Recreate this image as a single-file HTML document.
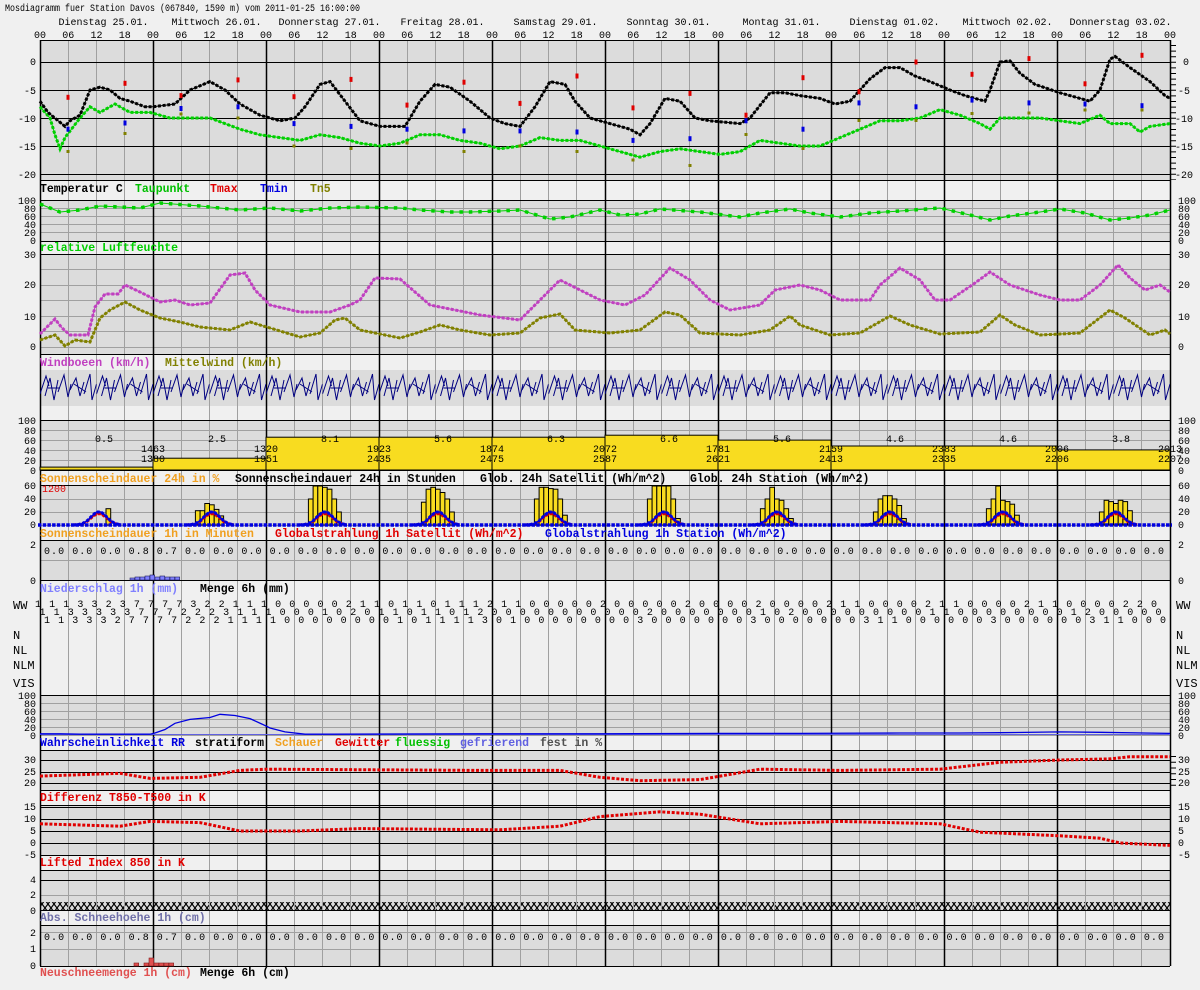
<!DOCTYPE html>
<html><head><meta charset="utf-8"><style>
html,body{margin:0;padding:0;background:#f0f0f0;}
svg{display:block;}
text{font-family:"Liberation Mono",monospace;}
.s{font-size:10px;fill:#000;}
.lb{font-size:11.5px;font-weight:bold;}
</style></head><body>
<svg xmlns="http://www.w3.org/2000/svg" xmlns:xlink="http://www.w3.org/1999/xlink" width="1200" height="990" viewBox="0 0 1200 990">
<defs>
<pattern id="hat" width="6" height="8" patternUnits="userSpaceOnUse">
<rect width="6" height="8" fill="#dcdcdc"/>
<path d="M0 0L6 8M6 0L0 8" stroke="#000" stroke-width="1.2"/>
</pattern>
<pattern id="barb" x="40" y="372" width="56.5" height="34" patternUnits="userSpaceOnUse">
<path d="M0 22L6 4L9 14M5 24L10 6L14 28L18 8M18 20L24 3L28 25L31 12M30 18L36 6L40 24L44 10M44 22L50 2L52 28L56.5 12M8 16H20M34 12L46 20" fill="none" stroke="#000080" stroke-width="1"/>
</pattern>
<g id="bellR"><polyline points="73,525 77.7,524.7 82.4,523.8 87.1,521.4 91.8,517.3 96.5,513.8 101.2,513.8 105.9,517.3 110.6,521.4 115.3,523.8 120,524.7" fill="none" stroke="#e00000" stroke-width="1.5"/><polyline points="73,525 77.7,524.7 82.4,523.8 87.1,521.4 91.8,517.3 96.5,513.8 101.2,513.8 105.9,517.3 110.6,521.4 115.3,523.8 120,524.7" fill="none" stroke="#e00000" stroke-width="3" stroke-dasharray="3 1.7"/>
<polyline points="73,525 77.7,524.7 82.4,523.6 87.1,520.8 91.8,516.1 96.5,512 101.2,512 105.9,516.1 110.6,520.8 115.3,523.6 120,524.7" fill="none" stroke="#0000e0" stroke-width="1.5"/><polyline points="73,525 77.7,524.7 82.4,523.6 87.1,520.8 91.8,516.1 96.5,512 101.2,512 105.9,516.1 110.6,520.8 115.3,523.6 120,524.7" fill="none" stroke="#0000e0" stroke-width="3" stroke-dasharray="3 1.7"/></g>
</defs>
<rect width="1200" height="990" fill="#f0f0f0"/>
<g fill="#dcdcdc">
<rect x="40" y="40" width="1130" height="140"/>
<rect x="40" y="200" width="1130" height="41"/>
<rect x="40" y="254" width="1130" height="100"/>
<rect x="40" y="370" width="1130" height="36"/>
<rect x="40" y="420" width="1130" height="50"/>
<rect x="40" y="485" width="1130" height="40"/>
<rect x="40" y="540" width="1130" height="40"/>
<rect x="40" y="695" width="1130" height="40"/>
<rect x="40" y="750" width="1130" height="40"/>
<rect x="40" y="805" width="1130" height="50"/>
<rect x="40" y="870" width="1130" height="40"/>
<rect x="40" y="925" width="1130" height="41"/>
</g>
<rect x="40" y="902" width="1130" height="8" fill="url(#hat)"/>
<!-- vertical gray grid -->
<path stroke="#a0a0a0" stroke-width="1" fill="none" d="M68.5 40V966M96.5 40V966M124.5 40V966M181.5 40V966M209.5 40V966M237.5 40V966M294.5 40V966M322.5 40V966M350.5 40V966M407.5 40V966M435.5 40V966M463.5 40V966M520.5 40V966M548.5 40V966M576.5 40V966M633.5 40V966M661.5 40V966M689.5 40V966M746.5 40V966M774.5 40V966M802.5 40V966M859.5 40V966M887.5 40V966M915.5 40V966M972.5 40V966M1000.5 40V966M1028.5 40V966M1085.5 40V966M1113.5 40V966M1141.5 40V966"/>

<!-- horizontal grid gray -->
<g stroke="#a0a0a0" stroke-width="1">
<path d="M40 208.5H1170M40 216.5H1170M40 224.5H1170M40 232.5H1170M40 269.5H1170M40 285.5H1170M40 300.5H1170M40 316.5H1170M40 331.5H1170M40 347.5H1170M40 430.5H1170M40 440.5H1170M40 450.5H1170M40 460.5H1170M40 499.5H1170M40 512.5H1170M40 525.5H1170M40 560.5H1170M40 703.5H1170M40 711.5H1170M40 719.5H1170M40 727.5H1170M40 735.5H1170M40 895.5H1170M40 932.5H1170M40 949.5H1170"/>
</g>
<g stroke="#000" stroke-width="1">
<path d="M40 40.5H1170M40 62.5H1170M40 90.5H1170M40 118.5H1170M40 146.5H1170M40 174.5H1170M40 180.5H1170M40 200.5H1170M40 241.5H1170M40 254.5H1170M40 354.5H1170M40 420.5H1170M40 470.5H1170M40 485.5H1170M40 540.5H1170M40 580.5H1170M40 695.5H1170M40 750.5H1170M40 760.5H1170M40 772.5H1170M40 783.5H1170M40 790.5H1170M40 805.5H1170M40 807.5H1170M40 819.5H1170M40 831.5H1170M40 843.5H1170M40 855.5H1170M40 870.5H1170M40 880.5H1170M40 910.5H1170M40 925.5H1170M40 966.5H1170"/>
</g>
<!-- vertical black day lines -->
<path stroke="#000" stroke-width="1.5" fill="none" d="M40.5 40V966M153.5 40V966M266.5 40V966M379.5 40V966M492.5 40V966M605.5 40V966M718.5 40V966M831.5 40V966M944.5 40V966M1057.5 40V966M1170.5 40V966"/>
<!-- right minor ticks -->
<line x1="1173" y1="45" x2="1173" y2="180" stroke="#000" stroke-width="6" stroke-dasharray="1 4.6"/>
<line x1="1173" y1="756" x2="1173" y2="790" stroke="#000" stroke-width="6" stroke-dasharray="1 4.75"/>

<!-- temperature -->
<polyline fill="none" stroke="#00d000" stroke-width="1" points="40,106.8 50,118 55,134.8 60,148.8 65,137.6 80,118 90,106.8 100,112.4 115,104 130,112.4 150,112.4 170,118 210,118 240,129.2 260,134.8 280,137.6 300,140.4 320,134.8 340,137.6 360,143.2 380,146 400,143.2 420,134.8 440,134.8 460,140.4 480,143.2 500,148.8 520,146 540,137.6 560,140.4 580,140.4 600,146 620,151.6 640,157.2 660,151.6 680,148.8 700,151.6 720,154.4 740,151.6 760,140.4 780,143.2 800,146 820,146 840,137.6 860,129.2 880,120.8 900,120.8 920,118 940,109.6 960,115.2 980,123.6 990,129.2 1000,118 1040,118 1060,120.8 1080,123.6 1100,115.2 1110,123.6 1130,123.6 1140,132 1150,126.4 1170,123.6"/>
<polyline fill="none" stroke="#00d000" stroke-width="3" stroke-dasharray="3 1.7" points="40,106.8 50,118 55,134.8 60,148.8 65,137.6 80,118 90,106.8 100,112.4 115,104 130,112.4 150,112.4 170,118 210,118 240,129.2 260,134.8 280,137.6 300,140.4 320,134.8 340,137.6 360,143.2 380,146 400,143.2 420,134.8 440,134.8 460,140.4 480,143.2 500,148.8 520,146 540,137.6 560,140.4 580,140.4 600,146 620,151.6 640,157.2 660,151.6 680,148.8 700,151.6 720,154.4 740,151.6 760,140.4 780,143.2 800,146 820,146 840,137.6 860,129.2 880,120.8 900,120.8 920,118 940,109.6 960,115.2 980,123.6 990,129.2 1000,118 1040,118 1060,120.8 1080,123.6 1100,115.2 1110,123.6 1130,123.6 1140,132 1150,126.4 1170,123.6"/>
<polyline fill="none" stroke="#000" stroke-width="1" points="40,101.2 48,112.4 65,126.4 70,120.8 80,115.2 90,90 100,87.2 110,90 120,98.4 130,101.2 145,106.8 153,106.8 175,104 190,90 210,81.6 225,90 240,104 260,115.2 280,120.8 295,118 305,106.8 320,84.4 330,81.6 345,101.2 360,120.8 380,126.4 405,126.4 420,101.2 435,84.4 450,87.2 470,101.2 490,118 505,123.6 520,126.4 535,106.8 550,81.6 565,84.4 575,101.2 590,118 610,123.6 630,129.2 640,134.8 650,123.6 665,98.4 680,101.2 695,118 710,120.8 740,123.6 750,118 770,92.8 785,92.8 800,95.6 820,98.4 835,104 850,101.2 870,78.8 885,67.6 900,67.6 915,76 930,81.6 950,90 965,95.6 985,101.2 990,90 1000,62 1010,60.9 1020,73.2 1035,84.4 1060,92.8 1080,98.4 1090,101.2 1100,90 1110,59.2 1115,56.4 1130,67.6 1150,81.6 1165,95.6 1170,98.4"/>
<polyline fill="none" stroke="#000" stroke-width="3" stroke-dasharray="3 1.7" points="40,101.2 48,112.4 65,126.4 70,120.8 80,115.2 90,90 100,87.2 110,90 120,98.4 130,101.2 145,106.8 153,106.8 175,104 190,90 210,81.6 225,90 240,104 260,115.2 280,120.8 295,118 305,106.8 320,84.4 330,81.6 345,101.2 360,120.8 380,126.4 405,126.4 420,101.2 435,84.4 450,87.2 470,101.2 490,118 505,123.6 520,126.4 535,106.8 550,81.6 565,84.4 575,101.2 590,118 610,123.6 630,129.2 640,134.8 650,123.6 665,98.4 680,101.2 695,118 710,120.8 740,123.6 750,118 770,92.8 785,92.8 800,95.6 820,98.4 835,104 850,101.2 870,78.8 885,67.6 900,67.6 915,76 930,81.6 950,90 965,95.6 985,101.2 990,90 1000,62 1010,60.9 1020,73.2 1035,84.4 1060,92.8 1080,98.4 1090,101.2 1100,90 1110,59.2 1115,56.4 1130,67.6 1150,81.6 1165,95.6 1170,98.4"/>
<!-- Tn5 -->
<g fill="#808000">
<rect x="66.5" y="150" width="3" height="3"/><rect x="123.5" y="132" width="3" height="3"/><rect x="179.5" y="112.5" width="3" height="3"/><rect x="236.5" y="116.5" width="3" height="3"/><rect x="292.5" y="144.5" width="3" height="3"/><rect x="349.5" y="147" width="3" height="3"/><rect x="405.5" y="141.5" width="3" height="3"/><rect x="462.5" y="150" width="3" height="3"/><rect x="518.5" y="144.5" width="3" height="3"/><rect x="575.5" y="150" width="3" height="3"/><rect x="631.5" y="158.5" width="3" height="3"/><rect x="688.5" y="164" width="3" height="3"/><rect x="744.5" y="133" width="3" height="3"/><rect x="801.5" y="147" width="3" height="3"/><rect x="857.5" y="119" width="3" height="3"/><rect x="914.5" y="119" width="3" height="3"/><rect x="970.5" y="112" width="3" height="3"/><rect x="1027.5" y="111.5" width="3" height="3"/><rect x="1083.5" y="108.5" width="3" height="3"/><rect x="1140.5" y="108.5" width="3" height="3"/>
</g>
<g fill="#0000e0">
<rect x="66.5" y="126.7" width="3" height="5"/><rect x="123.5" y="120.5" width="3" height="5"/><rect x="179.5" y="106" width="3" height="5"/><rect x="236.5" y="104.3" width="3" height="5"/><rect x="292.5" y="121.1" width="3" height="5"/><rect x="349.5" y="123.9" width="3" height="5"/><rect x="405.5" y="126.7" width="3" height="5"/><rect x="462.5" y="128.4" width="3" height="5"/><rect x="518.5" y="128.4" width="3" height="5"/><rect x="575.5" y="129.5" width="3" height="5"/><rect x="631.5" y="137.9" width="3" height="5"/><rect x="688.5" y="136.2" width="3" height="5"/><rect x="744.5" y="118.3" width="3" height="5"/><rect x="801.5" y="126.7" width="3" height="5"/><rect x="857.5" y="100.4" width="3" height="5"/><rect x="914.5" y="104.3" width="3" height="5"/><rect x="970.5" y="97.6" width="3" height="5"/><rect x="1027.5" y="100.4" width="3" height="5"/><rect x="1083.5" y="101.5" width="3" height="5"/><rect x="1140.5" y="103.2" width="3" height="5"/>
</g>
<g fill="#e00000">
<rect x="66.5" y="94.8" width="3" height="5"/><rect x="123.5" y="80.8" width="3" height="5"/><rect x="179.5" y="93.1" width="3" height="5"/><rect x="236.5" y="77.4" width="3" height="5"/><rect x="292.5" y="94.2" width="3" height="5"/><rect x="349.5" y="76.9" width="3" height="5"/><rect x="405.5" y="102.6" width="3" height="5"/><rect x="462.5" y="79.7" width="3" height="5"/><rect x="518.5" y="100.9" width="3" height="5"/><rect x="575.5" y="73.5" width="3" height="5"/><rect x="631.5" y="105.4" width="3" height="5"/><rect x="688.5" y="90.9" width="3" height="5"/><rect x="744.5" y="112.7" width="3" height="5"/><rect x="801.5" y="75.2" width="3" height="5"/><rect x="857.5" y="89.2" width="3" height="5"/><rect x="914.5" y="59.5" width="3" height="5"/><rect x="970.5" y="71.8" width="3" height="5"/><rect x="1027.5" y="56.1" width="3" height="5"/><rect x="1083.5" y="81.3" width="3" height="5"/><rect x="1140.5" y="52.8" width="3" height="5"/>
</g>

<!-- humidity -->
<polyline fill="none" stroke="#00d000" stroke-width="1" points="40,204 60,212 80,210 100,206 140,208 160,203 200,206 240,210 270,208 300,211 330,208 360,207 400,208 420,210 450,212 470,212 500,211 520,210 550,219 570,217 600,210 620,215 640,214 660,209 700,212 740,217 760,213 790,209 810,213 840,217 870,213 900,211 940,208 970,215 990,220 1010,216 1040,212 1060,209 1085,213 1110,220 1130,218 1150,215 1170,210"/>
<polyline fill="none" stroke="#00d000" stroke-width="3.5" stroke-dasharray="3.5 5.9" points="40,204 60,212 80,210 100,206 140,208 160,203 200,206 240,210 270,208 300,211 330,208 360,207 400,208 420,210 450,212 470,212 500,211 520,210 550,219 570,217 600,210 620,215 640,214 660,209 700,212 740,217 760,213 790,209 810,213 840,217 870,213 900,211 940,208 970,215 990,220 1010,216 1040,212 1060,209 1085,213 1110,220 1130,218 1150,215 1170,210"/>

<!-- wind -->
<polyline fill="none" stroke="#c040c0" stroke-width="1" points="40,334 55,319 62,328 70,335 88,335 95,307 105,294 118,294 125,285 140,292 160,302 175,300 190,305 210,303 230,275 245,273 255,290 270,305 300,312 330,312 350,305 360,300 375,278 400,279 430,305 460,311 480,315 520,320 545,295 560,280 580,290 600,300 625,305 645,295 670,268 690,280 710,300 730,310 760,305 775,290 800,285 820,290 840,300 870,300 880,285 900,268 920,280 935,300 950,300 975,283 990,272 1010,285 1040,295 1060,300 1080,300 1100,285 1118,265 1130,278 1145,290 1160,285 1170,292"/>
<polyline fill="none" stroke="#c040c0" stroke-width="3" stroke-dasharray="3 1.7" points="40,334 55,319 62,328 70,335 88,335 95,307 105,294 118,294 125,285 140,292 160,302 175,300 190,305 210,303 230,275 245,273 255,290 270,305 300,312 330,312 350,305 360,300 375,278 400,279 430,305 460,311 480,315 520,320 545,295 560,280 580,290 600,300 625,305 645,295 670,268 690,280 710,300 730,310 760,305 775,290 800,285 820,290 840,300 870,300 880,285 900,268 920,280 935,300 950,300 975,283 990,272 1010,285 1040,295 1060,300 1080,300 1100,285 1118,265 1130,278 1145,290 1160,285 1170,292"/>
<polyline fill="none" stroke="#808000" stroke-width="1" points="40,340 55,335 65,346 75,340 90,342 100,318 110,310 125,302 140,310 160,318 180,322 200,327 230,330 250,322 270,328 300,337 320,333 335,320 345,318 360,330 400,338 420,332 440,325 460,330 490,335 520,333 540,318 560,314 575,330 610,333 640,330 665,312 680,315 700,333 740,335 770,330 790,316 800,325 830,335 860,333 890,316 910,325 940,334 980,332 1000,315 1015,325 1040,335 1080,333 1110,310 1125,318 1150,335 1165,330 1170,334"/>
<polyline fill="none" stroke="#808000" stroke-width="3" stroke-dasharray="3 1.7" points="40,340 55,335 65,346 75,340 90,342 100,318 110,310 125,302 140,310 160,318 180,322 200,327 230,330 250,322 270,328 300,337 320,333 335,320 345,318 360,330 400,338 420,332 440,325 460,330 490,335 520,333 540,318 560,314 575,330 610,333 640,330 665,312 680,315 700,333 740,335 770,330 790,316 800,325 830,335 860,333 890,316 910,325 940,334 980,332 1000,315 1015,325 1040,335 1080,333 1110,310 1125,318 1150,335 1165,330 1170,334"/>
<rect x="40" y="372" width="1130" height="34" fill="url(#barb)"/>

<!-- sunshine 24h -->
<g fill="#f8dc20" stroke="#000" stroke-width="1">
<rect x="40" y="467.1" width="113" height="2.9"/><rect x="153" y="458.2" width="113" height="11.8"/><rect x="266" y="437.2" width="113" height="32.8"/><rect x="379" y="437.2" width="113" height="32.8"/><rect x="492" y="437.2" width="113" height="32.8"/><rect x="605" y="435.2" width="113" height="34.8"/><rect x="718" y="440.1" width="113" height="29.9"/><rect x="831" y="446" width="113" height="24"/><rect x="944" y="446" width="113" height="24"/><rect x="1057" y="449.9" width="113" height="20.1"/>
</g>
<!-- sunshine 1h bars -->
<g fill="#f8dc20" stroke="#000" stroke-width="1">
<rect x="106" y="508.7" width="4.7" height="16.3"/>
<rect x="195.4" y="510.7" width="4.7" height="14.3"/><rect x="200.1" y="510.7" width="4.7" height="14.3"/><rect x="204.8" y="503.5" width="4.7" height="21.5"/><rect x="209.5" y="504.8" width="4.7" height="20.2"/><rect x="214.2" y="509.4" width="4.7" height="15.6"/><rect x="218.9" y="515.9" width="4.7" height="9.1"/>
<rect x="308.4" y="499" width="4.7" height="26"/><rect x="313.1" y="486" width="4.7" height="39"/><rect x="317.8" y="486" width="4.7" height="39"/><rect x="322.5" y="487.3" width="4.7" height="37.7"/><rect x="327.2" y="489.2" width="4.7" height="35.8"/><rect x="331.9" y="499" width="4.7" height="26"/><rect x="336.6" y="512" width="4.7" height="13"/>
<rect x="421.4" y="502.2" width="4.7" height="22.8"/><rect x="426.1" y="489.2" width="4.7" height="35.8"/><rect x="430.8" y="487.3" width="4.7" height="37.7"/><rect x="435.5" y="489.2" width="4.7" height="35.8"/><rect x="440.2" y="492.5" width="4.7" height="32.5"/><rect x="444.9" y="499" width="4.7" height="26"/><rect x="449.6" y="512" width="4.7" height="13"/>
<rect x="534.4" y="499" width="4.7" height="26"/><rect x="539.1" y="487.3" width="4.7" height="37.7"/><rect x="543.8" y="487.3" width="4.7" height="37.7"/><rect x="548.5" y="488.6" width="4.7" height="36.4"/><rect x="553.2" y="489.2" width="4.7" height="35.8"/><rect x="557.9" y="499" width="4.7" height="26"/><rect x="562.6" y="515.2" width="4.7" height="9.8"/>
<rect x="647.4" y="499" width="4.7" height="26"/><rect x="652.1" y="486" width="4.7" height="39"/><rect x="656.8" y="486" width="4.7" height="39"/><rect x="661.5" y="486" width="4.7" height="39"/><rect x="666.2" y="486" width="4.7" height="39"/><rect x="670.9" y="499" width="4.7" height="26"/><rect x="675.6" y="518.5" width="4.7" height="6.5"/>
<rect x="760.4" y="508.7" width="4.7" height="16.3"/><rect x="765.1" y="499" width="4.7" height="26"/><rect x="769.8" y="487.3" width="4.7" height="37.7"/><rect x="774.5" y="499" width="4.7" height="26"/><rect x="779.2" y="500.3" width="4.7" height="24.7"/><rect x="783.9" y="508.7" width="4.7" height="16.3"/><rect x="788.6" y="518.5" width="4.7" height="6.5"/>
<rect x="873.4" y="512" width="4.7" height="13"/><rect x="878.1" y="499" width="4.7" height="26"/><rect x="882.8" y="495.7" width="4.7" height="29.3"/><rect x="887.5" y="495.7" width="4.7" height="29.3"/><rect x="892.2" y="499" width="4.7" height="26"/><rect x="896.9" y="505.5" width="4.7" height="19.5"/><rect x="901.6" y="518.5" width="4.7" height="6.5"/>
<rect x="986.4" y="508.7" width="4.7" height="16.3"/><rect x="991.1" y="499" width="4.7" height="26"/><rect x="995.8" y="486" width="4.7" height="39"/><rect x="1000.5" y="500.3" width="4.7" height="24.7"/><rect x="1005.2" y="501.6" width="4.7" height="23.4"/><rect x="1009.9" y="504.2" width="4.7" height="20.8"/><rect x="1014.6" y="515.2" width="4.7" height="9.8"/>
<rect x="1099.4" y="512" width="4.7" height="13"/><rect x="1104.1" y="500.3" width="4.7" height="24.7"/><rect x="1108.8" y="501.6" width="4.7" height="23.4"/><rect x="1113.5" y="503.5" width="4.7" height="21.5"/><rect x="1118.2" y="500.3" width="4.7" height="24.7"/><rect x="1122.9" y="501.6" width="4.7" height="23.4"/><rect x="1127.6" y="510.7" width="4.7" height="14.3"/>
</g>
<use xlink:href="#bellR" href="#bellR"/>
<use xlink:href="#bellR" href="#bellR" transform="translate(113 0)"/>
<use xlink:href="#bellR" href="#bellR" transform="translate(226 0)"/>
<use xlink:href="#bellR" href="#bellR" transform="translate(339 0)"/>
<use xlink:href="#bellR" href="#bellR" transform="translate(452 0)"/>
<use xlink:href="#bellR" href="#bellR" transform="translate(565 0)"/>
<use xlink:href="#bellR" href="#bellR" transform="translate(678 0)"/>
<use xlink:href="#bellR" href="#bellR" transform="translate(791 0)"/>
<use xlink:href="#bellR" href="#bellR" transform="translate(904 0)"/>
<use xlink:href="#bellR" href="#bellR" transform="translate(1017 0)"/>
<line x1="38" y1="525" x2="1172" y2="525" stroke="#0000e0" stroke-width="3.5" stroke-dasharray="3.5 1.2"/>

<!-- precipitation bars -->
<g fill="#8080ff" stroke="#202060" stroke-width="0.6">
<rect x="130" y="578" width="4.7" height="2"/><rect x="135" y="577" width="4.7" height="3"/><rect x="140" y="577" width="4.7" height="3"/><rect x="145" y="576" width="4.7" height="4"/><rect x="150" y="575" width="4.7" height="5"/><rect x="155" y="577" width="4.7" height="3"/><rect x="160" y="576" width="4.7" height="4"/><rect x="165" y="577" width="4.7" height="3"/><rect x="170" y="577" width="4.7" height="3"/><rect x="175" y="577" width="4.7" height="3"/>
</g>

<!-- RR probability -->
<line x1="40" y1="734.5" x2="1170" y2="734.5" stroke="#6060e0" stroke-width="1"/>
<polyline fill="none" stroke="#0000e0" stroke-width="1.3" points="40,733.8 60,733.8 80,734.2 100,734.2 150,734.2 155,733 165,729.5 175,723.3 190,719.4 210,717.5 220,714.3 235,715.5 250,718.6 262,724.1 270,728 285,731.9 305,734.2 330,734.2 480,733.8 600,733.8 720,733.4 800,733.4 900,733 960,733 1000,732.7 1060,731.9 1100,732.3 1170,733.4"/>

<!-- T850 / LI -->
<polyline fill="none" stroke="#e00000" stroke-width="3" stroke-dasharray="3 1.7" points="40,776.1 120,773.3 150,778.4 200,777.3 240,770.4 266,769.2 480,770.4 560,770.4 600,777.3 640,780.7 700,779.6 760,769.2 840,770.4 940,769.2 1000,762.3 1060,760 1110,758.9 1130,756.7 1170,756.7"/>
<polyline fill="none" stroke="#e00000" stroke-width="3" stroke-dasharray="3 1.7" points="40,823.8 120,826.2 150,821.4 200,822.6 240,831 300,831 360,828.6 500,829.8 560,826.2 600,816.6 660,811.8 700,814.2 760,823.8 840,821.4 940,823.8 980,832.2 1060,835.8 1100,838.2 1120,843 1170,845.4"/>

<!-- new snow bars -->
<g fill="#e05050" stroke="#802020" stroke-width="0.6">
<rect x="134" y="963" width="4.7" height="3"/><rect x="144" y="963" width="4.7" height="3"/><rect x="149" y="958" width="4.7" height="8"/><rect x="154" y="963" width="4.7" height="3"/><rect x="159" y="963" width="4.7" height="3"/><rect x="164" y="963" width="4.7" height="3"/><rect x="169" y="963" width="4.7" height="3"/>
</g>

<!-- header -->
<text class="s" x="5" y="11" textLength="355" lengthAdjust="spacingAndGlyphs">Mosdiagramm fuer Station Davos (067840, 1590 m) vom 2011-01-25 16:00:00</text>
<g class="s" text-anchor="middle">
<text x="103.5" y="25">Dienstag 25.01.</text>
<text x="216.5" y="25">Mittwoch 26.01.</text>
<text x="329.5" y="25">Donnerstag 27.01.</text>
<text x="442.5" y="25">Freitag 28.01.</text>
<text x="555.5" y="25">Samstag 29.01.</text>
<text x="668.5" y="25">Sonntag 30.01.</text>
<text x="781.5" y="25">Montag 31.01.</text>
<text x="894.5" y="25">Dienstag 01.02.</text>
<text x="1007.5" y="25">Mittwoch 02.02.</text>
<text x="1120.5" y="25">Donnerstag 03.02.</text>
</g>
<g class="s" text-anchor="middle">
<text x="40" y="38">00</text><text x="68.25" y="38">06</text><text x="96.5" y="38">12</text><text x="124.75" y="38">18</text>
<text x="153" y="38">00</text><text x="181.25" y="38">06</text><text x="209.5" y="38">12</text><text x="237.75" y="38">18</text>
<text x="266" y="38">00</text><text x="294.25" y="38">06</text><text x="322.5" y="38">12</text><text x="350.75" y="38">18</text>
<text x="379" y="38">00</text><text x="407.25" y="38">06</text><text x="435.5" y="38">12</text><text x="463.75" y="38">18</text>
<text x="492" y="38">00</text><text x="520.25" y="38">06</text><text x="548.5" y="38">12</text><text x="576.75" y="38">18</text>
<text x="605" y="38">00</text><text x="633.25" y="38">06</text><text x="661.5" y="38">12</text><text x="689.75" y="38">18</text>
<text x="718" y="38">00</text><text x="746.25" y="38">06</text><text x="774.5" y="38">12</text><text x="802.75" y="38">18</text>
<text x="831" y="38">00</text><text x="859.25" y="38">06</text><text x="887.5" y="38">12</text><text x="915.75" y="38">18</text>
<text x="944" y="38">00</text><text x="972.25" y="38">06</text><text x="1000.5" y="38">12</text><text x="1028.75" y="38">18</text>
<text x="1057" y="38">00</text><text x="1085.25" y="38">06</text><text x="1113.5" y="38">12</text><text x="1141.75" y="38">18</text>
<text x="1170" y="38">00</text>
</g>

<!-- axis labels left -->
<g class="s" text-anchor="end">
<text x="36" y="65">0</text><text x="36" y="94">-5</text><text x="36" y="122">-10</text><text x="36" y="150">-15</text><text x="36" y="178">-20</text>
<text x="36" y="204">100</text><text x="36" y="212">80</text><text x="36" y="220">60</text><text x="36" y="228">40</text><text x="36" y="236">20</text><text x="36" y="244">0</text>
<text x="36" y="258">30</text><text x="36" y="288">20</text><text x="36" y="320">10</text><text x="36" y="350">0</text>
<text x="36" y="424">100</text><text x="36" y="434">80</text><text x="36" y="444">60</text><text x="36" y="454">40</text><text x="36" y="464">20</text><text x="36" y="474">0</text>
<text x="36" y="489">60</text><text x="36" y="502">40</text><text x="36" y="515">20</text><text x="36" y="528">0</text>
<text x="36" y="548">2</text><text x="36" y="584">0</text>
<text x="36" y="699">100</text><text x="36" y="707">80</text><text x="36" y="715">60</text><text x="36" y="723">40</text><text x="36" y="731">20</text><text x="36" y="739">0</text>
<text x="36" y="763">30</text><text x="36" y="775">25</text><text x="36" y="786">20</text>
<text x="36" y="810">15</text><text x="36" y="822">10</text><text x="36" y="834">5</text><text x="36" y="846">0</text><text x="36" y="858">-5</text>
<text x="36" y="883">4</text><text x="36" y="898">2</text><text x="36" y="914">0</text>
<text x="36" y="936">2</text><text x="36" y="952">1</text><text x="36" y="969">0</text>
</g>
<g class="s">
<text x="1183" y="65">0</text><text x="1178" y="94">-5</text><text x="1175" y="122">-10</text><text x="1175" y="150">-15</text><text x="1175" y="178">-20</text>
<text x="1178" y="204">100</text><text x="1178" y="212">80</text><text x="1178" y="220">60</text><text x="1178" y="228">40</text><text x="1178" y="236">20</text><text x="1178" y="244">0</text>
<text x="1178" y="258">30</text><text x="1178" y="288">20</text><text x="1178" y="320">10</text><text x="1178" y="350">0</text>
<text x="1178" y="424">100</text><text x="1178" y="434">80</text><text x="1178" y="444">60</text><text x="1178" y="454">40</text><text x="1178" y="464">20</text><text x="1178" y="474">0</text>
<text x="1178" y="489">60</text><text x="1178" y="502">40</text><text x="1178" y="515">20</text><text x="1178" y="528">0</text>
<text x="1178" y="548">2</text><text x="1178" y="584">0</text>
<text x="1178" y="699">100</text><text x="1178" y="707">80</text><text x="1178" y="715">60</text><text x="1178" y="723">40</text><text x="1178" y="731">20</text><text x="1178" y="739">0</text>
<text x="1178" y="763">30</text><text x="1178" y="775">25</text><text x="1178" y="786">20</text>
<text x="1178" y="810">15</text><text x="1178" y="822">10</text><text x="1178" y="834">5</text><text x="1178" y="846">0</text><text x="1178" y="858">-5</text>
</g>
<g style="font-size:12px">
<text x="13" y="609">WW</text><text x="13" y="639">N</text><text x="13" y="654">NL</text><text x="13" y="669">NLM</text><text x="13" y="687">VIS</text>
<text x="1176" y="609">WW</text><text x="1176" y="639">N</text><text x="1176" y="654">NL</text><text x="1176" y="669">NLM</text><text x="1176" y="687">VIS</text>
</g>

<!-- WW rows -->
<text class="s" x="35" y="607" textLength="1122" lengthAdjust="spacing">1 1 1 3 3 2 3 7 7 7 7 3 2 2 1 1 1 0 0 0 0 0 2 1 1 0 1 1 0 1 1 1 2 1 1 0 0 0 0 0 2 0 0 0 0 0 2 0 0 0 0 2 0 0 0 0 2 1 1 0 0 0 0 2 1 1 0 0 0 0 2 1 1 0 0 0 0 2 2 0</text>
<text class="s" x="39.5" y="615" textLength="1122" lengthAdjust="spacing">1 1 3 3 3 3 3 7 7 7 2 2 2 3 1 1 1 0 0 0 1 0 2 0 1 1 0 1 1 0 1 2 0 0 0 0 0 0 0 0 0 0 0 2 0 0 0 0 0 0 0 1 0 2 0 0 0 0 0 0 0 0 0 1 1 0 0 0 0 0 0 0 0 1 2 0 0 0 0 0</text>
<text class="s" x="44" y="623" textLength="1122" lengthAdjust="spacing">1 1 3 3 3 2 7 7 7 7 2 2 2 1 1 1 1 0 0 0 0 0 0 0 0 1 0 1 1 1 1 3 0 1 0 0 0 0 0 0 0 0 3 0 0 0 0 0 0 0 3 0 0 0 0 0 0 0 3 1 1 0 0 0 0 0 0 3 0 0 0 0 0 0 3 1 1 0 0 0</text>

<!-- 0.0 rows -->
<text class="s" x="44" y="554" textLength="1120" lengthAdjust="spacing">0.0 0.0 0.0 0.8 0.7 0.0 0.0 0.0 0.0 0.0 0.0 0.0 0.0 0.0 0.0 0.0 0.0 0.0 0.0 0.0 0.0 0.0 0.0 0.0 0.0 0.0 0.0 0.0 0.0 0.0 0.0 0.0 0.0 0.0 0.0 0.0 0.0 0.0 0.0 0.0</text>
<text class="s" x="44" y="940" textLength="1120" lengthAdjust="spacing">0.0 0.0 0.0 0.8 0.7 0.0 0.0 0.0 0.0 0.0 0.0 0.0 0.0 0.0 0.0 0.0 0.0 0.0 0.0 0.0 0.0 0.0 0.0 0.0 0.0 0.0 0.0 0.0 0.0 0.0 0.0 0.0 0.0 0.0 0.0 0.0 0.0 0.0 0.0 0.0</text>

<!-- sunshine 24h texts -->
<g class="s" text-anchor="middle">
<text x="104" y="442">0.5</text><text x="217" y="442">2.5</text><text x="330" y="442">8.1</text><text x="443" y="442">5.6</text><text x="556" y="442">6.3</text><text x="669" y="442">6.6</text><text x="782" y="442">5.6</text><text x="895" y="442">4.6</text><text x="1008" y="442">4.6</text><text x="1121" y="442">3.8</text>
<text x="153" y="452">1463</text><text x="153" y="462">1380</text>
<text x="266" y="452">1320</text><text x="266" y="462">1951</text>
<text x="379" y="452">1923</text><text x="379" y="462">2435</text>
<text x="492" y="452">1874</text><text x="492" y="462">2475</text>
<text x="605" y="452">2072</text><text x="605" y="462">2587</text>
<text x="718" y="452">1781</text><text x="718" y="462">2621</text>
<text x="831" y="452">2159</text><text x="831" y="462">2413</text>
<text x="944" y="452">2383</text><text x="944" y="462">2335</text>
<text x="1057" y="452">2006</text><text x="1057" y="462">2206</text>
<text x="1170" y="452">2013</text><text x="1170" y="462">2207</text>
</g>
<text x="42" y="492" style="font-size:10px;fill:#e00000">1200</text>

<!-- band labels -->
<g class="lb">
<text x="40" y="192" fill="#000">Temperatur C</text>
<text x="135" y="192" fill="#00c000">Taupunkt</text>
<text x="210" y="192" fill="#e00000">Tmax</text>
<text x="260" y="192" fill="#0000e0">Tmin</text>
<text x="310" y="192" fill="#808000">Tn5</text>
<text x="40" y="251" fill="#00d000">relative Luftfeuchte</text>
<text x="40" y="366" fill="#c040c0">Windboeen (km/h)</text>
<text x="165" y="366" fill="#808000">Mittelwind (km/h)</text>
<text x="40" y="482" fill="#f0a020">Sonnenscheindauer 24h in %</text>
<text x="235" y="482" fill="#000">Sonnenscheindauer 24h in Stunden</text>
<text x="480" y="482" fill="#000">Glob. 24h Satellit (Wh/m^2)</text>
<text x="690" y="482" fill="#000">Glob. 24h Station (Wh/m^2)</text>
<text x="40" y="537" fill="#f0a020">Sonnenscheindauer 1h in Minuten</text>
<text x="275" y="537" fill="#e00000">Globalstrahlung 1h Satellit (Wh/m^2)</text>
<text x="545" y="537" fill="#0000e0">Globalstrahlung 1h Station (Wh/m^2)</text>
<text x="40" y="592" fill="#8080ff">Niederschlag 1h (mm)</text>
<text x="200" y="592" fill="#000">Menge 6h (mm)</text>
<text x="40" y="746" fill="#0000e0">Wahrscheinlichkeit RR</text>
<text x="195" y="746" fill="#000">stratiform</text>
<text x="275" y="746" fill="#f0a020">Schauer</text>
<text x="335" y="746" fill="#e00000">Gewitter</text>
<text x="395" y="746" fill="#00c000">fluessig</text>
<text x="460" y="746" fill="#6060e0">gefrierend</text>
<text x="540" y="746" fill="#505050">fest in %</text>
<text x="40" y="801" fill="#e00000">Differenz T850-T500 in K</text>
<text x="40" y="866" fill="#e00000">Lifted Index 850 in K</text>
<text x="40" y="921" fill="#7070a8">Abs. Schneehoehe 1h (cm)</text>
<text x="40" y="976" fill="#e05050">Neuschneemenge 1h (cm)</text>
<text x="200" y="976" fill="#000">Menge 6h (cm)</text>
</g>
</svg>
</body></html>
